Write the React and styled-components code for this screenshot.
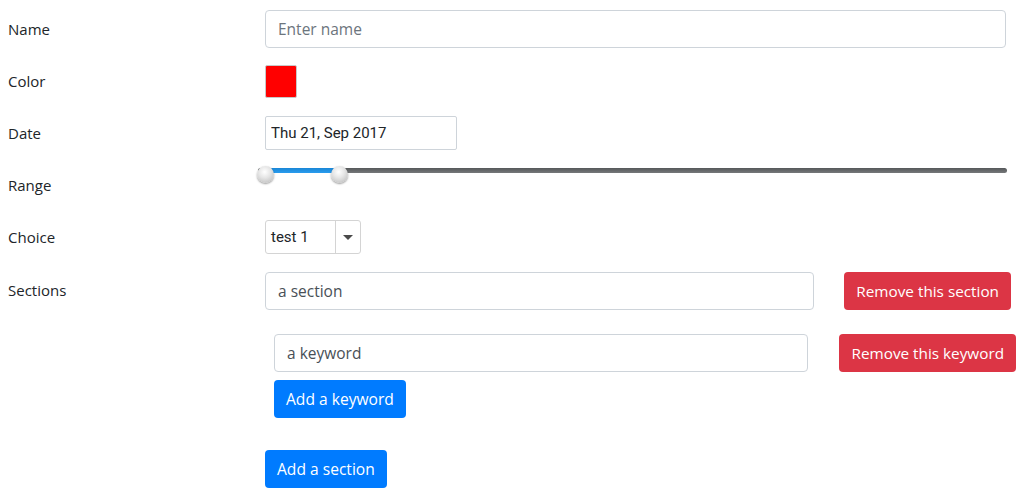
import React, { useState } from 'react'
import styled, { createGlobalStyle } from 'styled-components'

const GlobalStyle = createGlobalStyle`
    body {
        margin: 0;
        background: #fff;
        font-family: "Open Sans", "Noto Sans", sans-serif;
        color: #212529;
    }
    * { box-sizing: border-box; }
`

const Form = styled.div`
    display: grid;
    grid-template-columns: 257px 746px;
    padding: 3px 0 0 8px;
`

const Label = styled.div`
    font-size: 15px;
    height: 52px;
    display: flex;
    align-items: ${props => props.top ? 'flex-start' : 'center'};
    padding-top: ${props => props.top ? '17px' : '0'};
`

const Field = styled.div`
    min-height: 52px;
    display: flex;
    align-items: ${props => props.top ? 'flex-start' : 'center'};
`

const TextInput = styled.input`
    height: 38px;
    width: ${props => props.width || '100%'};
    flex: ${props => props.grow ? 1 : 'none'};
    border: 1px solid #ced4da;
    border-radius: 4px;
    padding: 6px 12px;
    font-family: "Open Sans", "Noto Sans", sans-serif;
    font-size: 15.5px;
    color: #495057;
    outline: none;
    &::placeholder { color: #6c757d; }
`

const Swatch = styled.div`
    width: 32px;
    height: 33px;
    border: 1px solid #c8c8c8;
    border-radius: 2px;
    background: ${props => props.color};
    margin-top: 1px;
`

const DateInput = styled.input`
    width: 192px;
    height: 34px;
    border: 1px solid #ced4da;
    border-radius: 2px;
    padding: 0 5px;
    font-family: Roboto, "Liberation Sans", sans-serif;
    font-size: 15px;
    color: #212529;
    outline: none;
`

const SliderWrap = styled.div`
    position: relative;
    width: 749px;
    height: 18px;
    margin: 7px 0 0 -7px;
`

const Track = styled.div`
    position: absolute;
    left: 0;
    right: 0;
    top: 2px;
    height: 5px;
    border-radius: 3px;
    background: linear-gradient(#55585a, #76787a);
`

const TrackFill = styled.div`
    position: absolute;
    top: 2px;
    height: 5px;
    background: linear-gradient(#1a86d6, #2a9cee);
`

const Thumb = styled.div`
    position: absolute;
    top: 0;
    width: 17px;
    height: 17px;
    margin-left: -8px;
    border-radius: 50%;
    background: radial-gradient(circle at 45% 35%, #ffffff 0%, #e6e6e6 40%, #b4b4b4 100%);
    box-shadow: 0 1px 2px rgba(0, 0, 0, 0.4);
`

const Select = styled.div`
    display: flex;
    width: 96px;
    height: 34px;
    border: 1px solid #d4d4d4;
    border-radius: 3px;
    font-family: Roboto, "Liberation Sans", sans-serif;
    font-size: 15px;
    color: #212529;
`

const SelectValue = styled.div`
    flex: 1;
    display: flex;
    align-items: center;
    padding-left: 5px;
    border-right: 1px solid #d4d4d4;
`

const SelectArrow = styled.div`
    width: 24px;
    display: flex;
    align-items: center;
    justify-content: center;
    &::after {
        content: '';
        border-left: 5px solid transparent;
        border-right: 5px solid transparent;
        border-top: 5px solid #4a4a4a;
    }
`

const Sections = styled.div`
    padding-top: 9px;
    display: flex;
    flex-direction: column;
`

const InputRow = styled.div`
    display: flex;
    gap: ${props => props.gap}px;
    width: ${props => props.width}px;
`

const Keyword = styled.div`
    margin: 24px 0 0 9px;
    display: flex;
    flex-direction: column;
    align-items: flex-start;
    gap: 8px;
`

const Button = styled.button`
    height: 38px;
    padding: 0 12px;
    border: none;
    border-radius: 4px;
    font-family: "Open Sans", "Noto Sans", sans-serif;
    font-size: ${props => props.danger ? '15.3px' : '15.6px'};
    color: #fff;
    background: ${props => props.danger ? '#dc3545' : '#007bff'};
    cursor: pointer;
    white-space: nowrap;
    margin-top: ${props => props.mt || 0}px;
    align-self: flex-start;
`

export default function App() {
    const [name, setName] = useState('')
    const min = 0
    const max = 100
    const low = 0
    const high = 10
    const pos = v => 7 + ((v - min) / (max - min)) * 742

    return (
        <>
            <GlobalStyle />
            <Form>
                <Label>Name</Label>
                <Field>
                    <TextInput width="741px" placeholder="Enter name" value={name} onChange={e => setName(e.target.value)} />
                </Field>

                <Label>Color</Label>
                <Field>
                    <Swatch color="#ff0000" />
                </Field>

                <Label>Date</Label>
                <Field>
                    <DateInput defaultValue="Thu 21, Sep 2017" />
                </Field>

                <Label>Range</Label>
                <Field top>
                    <SliderWrap>
                        <Track />
                        <TrackFill style={{ left: pos(low), width: pos(high) - pos(low) }} />
                        <Thumb style={{ left: pos(low) }} />
                        <Thumb style={{ left: pos(high) }} />
                    </SliderWrap>
                </Field>

                <Label>Choice</Label>
                <Field>
                    <Select>
                        <SelectValue>test 1</SelectValue>
                        <SelectArrow />
                    </Select>
                </Field>

                <Label top>Sections</Label>
                <Sections>
                    <InputRow gap={30} width={746}>
                        <TextInput grow defaultValue="a section" />
                        <Button danger>Remove this section</Button>
                    </InputRow>
                    <Keyword>
                        <InputRow gap={31} width={742}>
                            <TextInput grow defaultValue="a keyword" />
                            <Button danger>Remove this keyword</Button>
                        </InputRow>
                        <Button>Add a keyword</Button>
                    </Keyword>
                    <Button mt={32}>Add a section</Button>
                </Sections>
            </Form>
        </>
    )
}
